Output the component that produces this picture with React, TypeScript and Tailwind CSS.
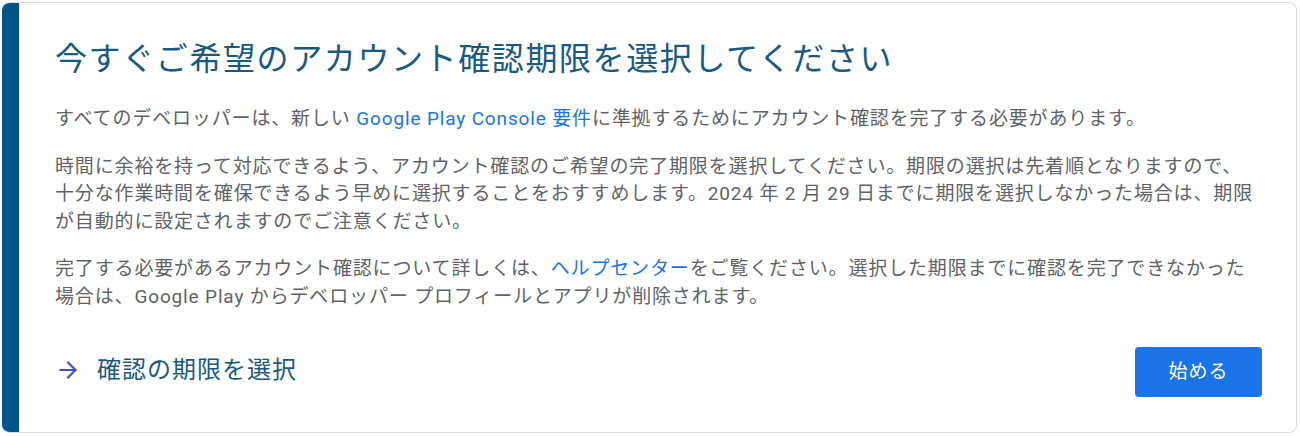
import { ArrowRight } from "lucide-react";

const font = { fontFamily: 'Roboto, "Noto Sans CJK JP", sans-serif' };

export default function App() {
  return (
    <div className="bg-white w-[1300px] h-[436px] p-[2px]" style={font}>
      <div className="flex h-[431px] w-[1295px] rounded-lg border border-[#dadce0] border-l-0 overflow-hidden">
        <div className="w-[17px] shrink-0 bg-[#01548a]" />
        <div className="flex flex-1 flex-col pl-[36px] pr-[20px] pt-[34px] pb-[35px]">
          <h1 className="text-[32px] leading-[44px] text-[#1a5a80] tracking-[1.6px]">
            今すぐご希望のアカウント確認期限を選択してください
          </h1>
          <div className="mt-[24px] flex flex-col gap-[20px] text-[19px] leading-[27.5px] tracking-[0.85px] text-[#5f6368]">
            <p>
              すべてのデベロッパーは、新しい{" "}
              <a className="text-[#1a73e8]">Google Play Console 要件</a>
              に準拠するためにアカウント確認を完了する必要があります。
            </p>
            <p>
              時間に余裕を持って対応できるよう、アカウント確認のご希望の完了期限を選択してください。期限の選択は先着順となりますので、
              <br />
              十分な作業時間を確保できるよう早めに選択することをおすすめします。2024 年 2 月 29 日までに期限を選択しなかった場合は、期限
              <br />
              が自動的に設定されますのでご注意ください。
            </p>
            <p>
              完了する必要があるアカウント確認について詳しくは、
              <a className="text-[#1a73e8]">ヘルプセンター</a>
              をご覧ください。選択した期限までに確認を完了できなかった
              <br />
              場合は、Google Play からデベロッパー プロフィールとアプリが削除されます。
            </p>
          </div>
          <div className="mt-auto flex items-center justify-between">
            <div className="flex items-center gap-[16px] pb-[4px]">
              <ArrowRight className="h-[26px] w-[26px] text-[#3f51b5]" strokeWidth={2} />
              <span className="text-[24px] tracking-[1px] text-[#1a5a80]">確認の期限を選択</span>
            </div>
            <button className="mr-[14px] h-[50px] w-[127px] rounded-[4px] bg-[#1a73e8] text-[19px] tracking-[1px] text-white">
              始める
            </button>
          </div>
        </div>
      </div>
    </div>
  );
}
